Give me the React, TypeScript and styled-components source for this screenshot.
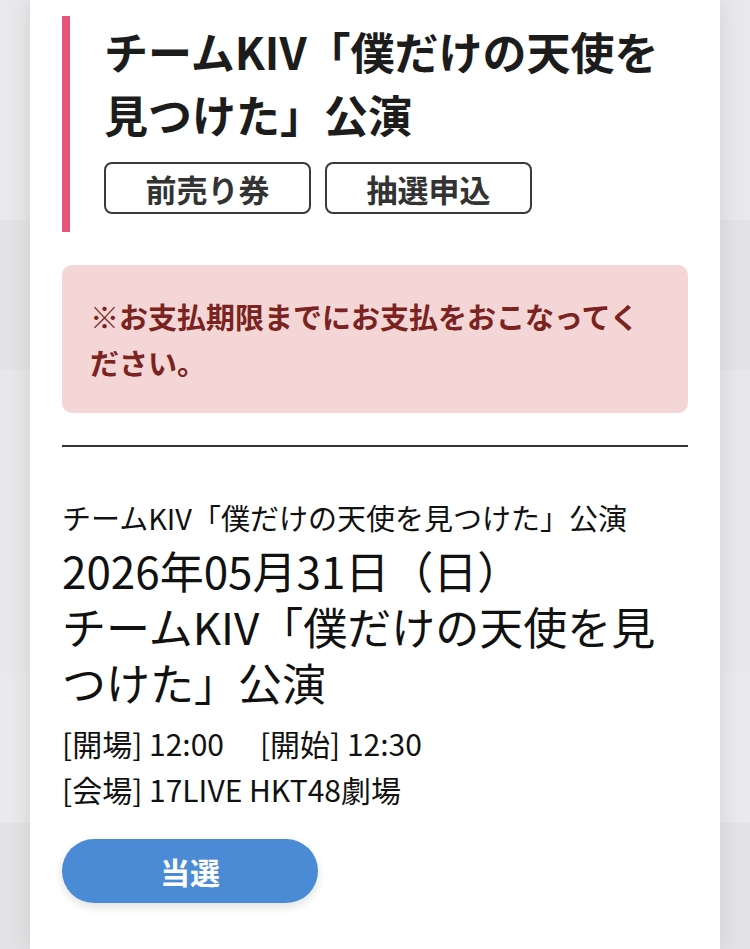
import { FC } from "react";
import styled, { createGlobalStyle } from "styled-components";

const GlobalStyle = createGlobalStyle`
  html, body {
    margin: 0;
    padding: 0;
  }
  body {
    font-family: "Noto Sans CJK JP", "Noto Sans", sans-serif;
    background: linear-gradient(
      to bottom,
      #e9e9eb 0px,
      #e9e9eb 220px,
      #e3e3e5 220px,
      #e3e3e5 370px,
      #e8e8ea 370px,
      #e8e8ea 673px,
      #eaeaec 673px,
      #eaeaec 823px,
      #e3e3e5 823px
    );
    min-height: 949px;
  }
`;

const Page = styled.div`
  padding: 0 30px;
  overflow: hidden;
`;

const Card = styled.div`
  background: #ffffff;
  min-height: 949px;
  padding: 16px 32px 0;
  box-sizing: border-box;
  box-shadow: 0 0 22px rgba(0, 0, 0, 0.1);
`;

const Header = styled.div`
  border-left: 8px solid #e65679;
  padding: 4px 0 18px 34px;
`;

const Title = styled.h1`
  margin: 0;
  font-size: 44px;
  line-height: 63px;
  font-weight: 700;
  color: #1c1c1c;
`;

const Tags = styled.div`
  display: flex;
  gap: 14px;
  margin-top: 16px;
`;

const Tag = styled.span`
  display: flex;
  align-items: center;
  justify-content: center;
  width: 207px;
  height: 52px;
  box-sizing: border-box;
  border: 2px solid #3a3a3a;
  border-radius: 8px;
  font-size: 31px;
  font-weight: 700;
  color: #333333;
`;

const Alert = styled.div`
  margin-top: 33px;
  background: #f3d6d5;
  border-radius: 10px;
  padding: 28px 40px 28px 28px;
  font-size: 29px;
  line-height: 46px;
  font-weight: 700;
  color: #7a2320;
`;

const Divider = styled.hr`
  margin: 32px 0 0;
  border: none;
  border-top: 2px solid #333333;
`;

const Info = styled.div`
  margin-top: 48px;
  color: #111111;
`;

const Subtitle = styled.div`
  font-size: 29px;
  line-height: 45px;
`;

const Heading = styled.div`
  margin-top: 2px;
  font-size: 44px;
  line-height: 56px;
`;

const Times = styled.div`
  margin-top: 10px;
  font-size: 30px;
  line-height: 46px;
`;

const Spacer = styled.span`
  display: inline-block;
  width: 36px;
`;

const ResultButton = styled.button`
  margin-top: 27px;
  width: 256px;
  height: 64px;
  border: none;
  border-radius: 32px;
  background: #4b8bd6;
  color: #ffffff;
  font-family: inherit;
  font-size: 30px;
  font-weight: 700;
  box-shadow: 0 4px 10px rgba(0, 0, 0, 0.12);
`;

const App: FC = () => (
  <>
    <GlobalStyle />
    <Page>
      <Card>
        <Header>
          <Title>チームKIV「僕だけの天使を見つけた」公演</Title>
          <Tags>
            <Tag>前売り券</Tag>
            <Tag>抽選申込</Tag>
          </Tags>
        </Header>

        <Alert>※お支払期限までにお支払をおこなってください。</Alert>

        <Divider />

        <Info>
          <Subtitle>チームKIV「僕だけの天使を見つけた」公演</Subtitle>
          <Heading>
            2026年05月31日（日）
            <br />
            チームKIV「僕だけの天使を見つけた」公演
          </Heading>
          <Times>
            [開場] 12:00<Spacer />[開始] 12:30
            <br />
            [会場] 17LIVE HKT48劇場
          </Times>
          <ResultButton>当選</ResultButton>
        </Info>
      </Card>
    </Page>
  </>
);

export default App;
